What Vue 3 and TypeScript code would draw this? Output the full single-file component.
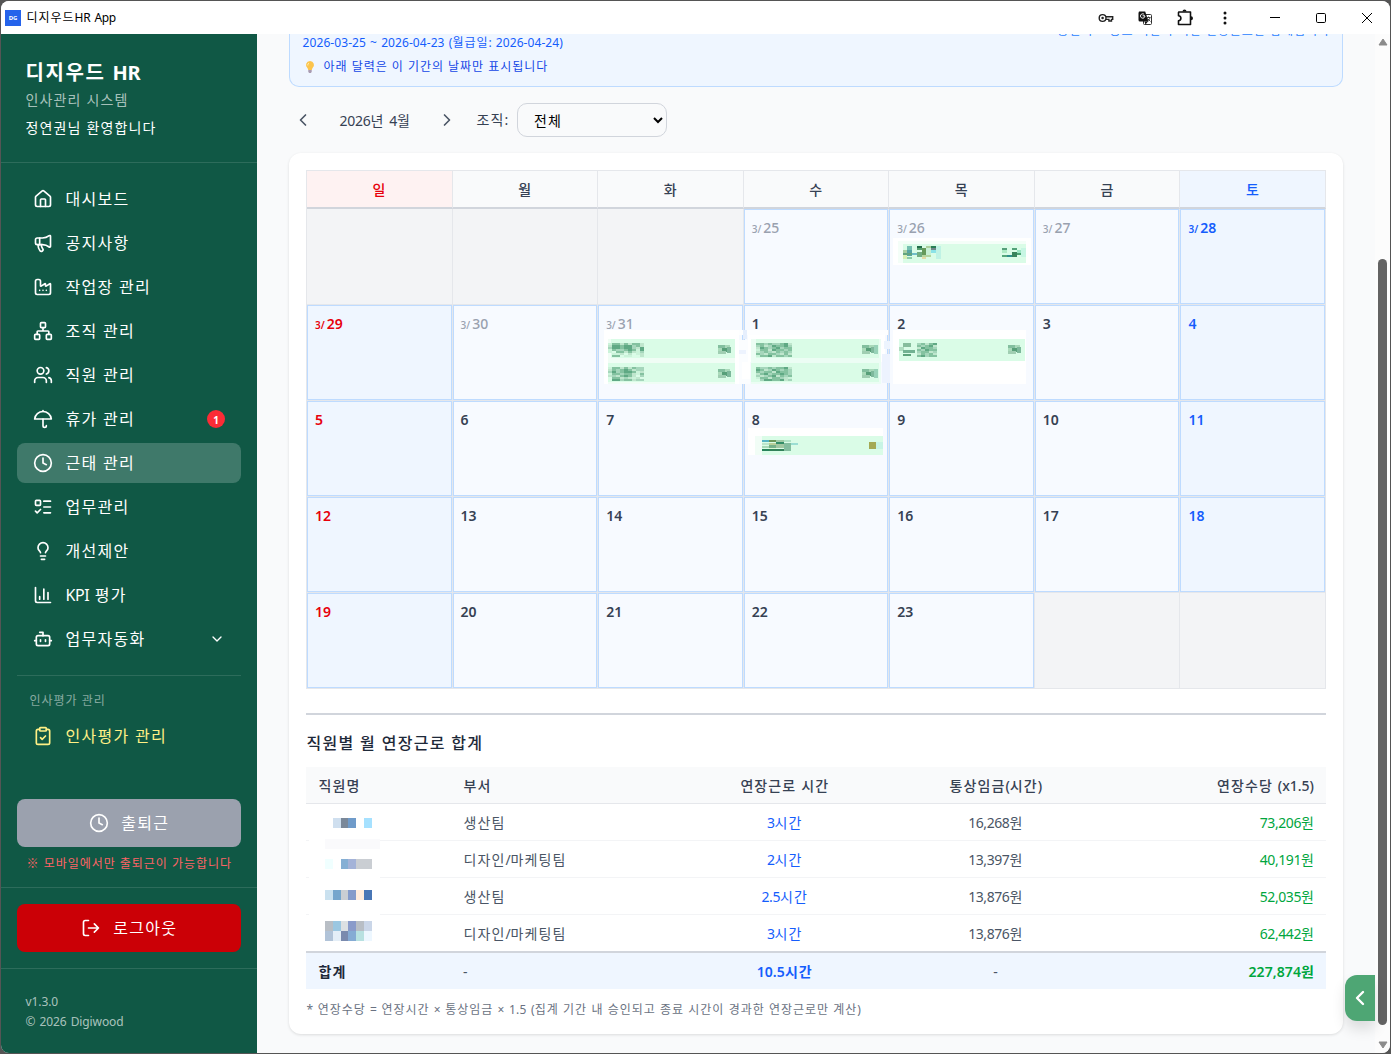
<script setup lang="ts">
import { h, type FunctionalComponent } from 'vue'

// Splits a label into Hangul and Latin runs, so that each gets its own tracking.
const Tx: FunctionalComponent<{ t: string }> = (props) =>
  h(
    'span',
    { class: 'tx' },
    (props.t.match(/[\uac00-\ud7a3\s※]+|[^\uac00-\ud7a3\s※]+/g) ?? []).map((run) =>
      h('span', { class: /[\uac00-\ud7a3\s※]/.test(run) ? 'ko' : 'la' }, run),
    ),
  )
Tx.props = ['t']

const icons: Record<string, string[]> = {
  house: [
    'M15 21v-8a1 1 0 0 0-1-1h-4a1 1 0 0 0-1 1v8',
    'M3 10a2 2 0 0 1 .709-1.528l7-5.999a2 2 0 0 1 2.582 0l7 5.999A2 2 0 0 1 21 10v9a2 2 0 0 1-2 2H5a2 2 0 0 1-2-2z',
  ],
  megaphone: [
    'M11 6a13 13 0 0 0 8.4-2.8A1 1 0 0 1 21 4v12a1 1 0 0 1-1.6.8A13 13 0 0 0 11 14H5a2 2 0 0 1-2-2V8a2 2 0 0 1 2-2z',
    'M6 14a12 12 0 0 0 2.4 7.2 2 2 0 0 0 3.2-2.4A8 8 0 0 1 10 14',
    'M8 6v8',
  ],
  factory: [
    'M12 16h.01M16 16h.01M8 16h.01',
    'M3 19a2 2 0 0 0 2 2h14a2 2 0 0 0 2-2V8.5a.5.5 0 0 0-.769-.422l-4.462 2.844A.5.5 0 0 1 15 10.5v-2a.5.5 0 0 0-.769-.422L9.77 10.922A.5.5 0 0 1 9 10.5V5a2 2 0 0 0-2-2H5a2 2 0 0 0-2 2z',
  ],
  network: [
    'M17 16h4a1 1 0 0 1 1 1v4a1 1 0 0 1-1 1h-4a1 1 0 0 1-1-1v-4a1 1 0 0 1 1-1z',
    'M3 16h4a1 1 0 0 1 1 1v4a1 1 0 0 1-1 1H3a1 1 0 0 1-1-1v-4a1 1 0 0 1 1-1z',
    'M10 2h4a1 1 0 0 1 1 1v4a1 1 0 0 1-1 1h-4a1 1 0 0 1-1-1V3a1 1 0 0 1 1-1z',
    'M5 16v-3a1 1 0 0 1 1-1h12a1 1 0 0 1 1 1v3M12 12V8',
  ],
  users: [
    'M16 21v-2a4 4 0 0 0-4-4H6a4 4 0 0 0-4 4v2',
    'M16 3.128a4 4 0 0 1 0 7.744M22 21v-2a4 4 0 0 0-3-3.87',
    'M5 7a4 4 0 1 0 8 0a4 4 0 1 0-8 0',
  ],
  umbrella: ['M22 12a10.06 10.06 1 0 0-20 0Z', 'M12 12v8a2 2 0 0 0 4 0M12 2v1'],
  clock: ['M2 12a10 10 0 1 0 20 0a10 10 0 1 0-20 0', 'M12 6v6l4 2'],
  todo: [
    'M13 5h8M13 12h8M13 19h8m-18-2 2 2 4-4',
    'M4 4h4a1 1 0 0 1 1 1v4a1 1 0 0 1-1 1H4a1 1 0 0 1-1-1V5a1 1 0 0 1 1-1z',
  ],
  bulb: [
    'M15 14c.2-1 .7-1.7 1.5-2.5 1-.9 1.5-2.2 1.5-3.5A6 6 0 0 0 6 8c0 1 .2 2.2 1.5 3.5.7.7 1.3 1.5 1.5 2.5',
    'M9 18h6M10 22h4',
  ],
  chart: ['M3 3v16a2 2 0 0 0 2 2h16', 'M18 17V9M13 17V5M8 17v-3'],
  bot: [
    'M12 8V4H8M2 14h2M20 14h2M15 13v2M9 13v2',
    'M6 8h12a2 2 0 0 1 2 2v8a2 2 0 0 1-2 2H6a2 2 0 0 1-2-2v-8a2 2 0 0 1 2-2z',
  ],
  clipboard: [
    'M9 2h6a1 1 0 0 1 1 1v2a1 1 0 0 1-1 1H9a1 1 0 0 1-1-1V3a1 1 0 0 1 1-1z',
    'M16 4h2a2 2 0 0 1 2 2v14a2 2 0 0 1-2 2H6a2 2 0 0 1-2-2V6a2 2 0 0 1 2-2h2',
    'm9 14 2 2 4-4',
  ],
  logout: ['m16 17 5-5-5-5M21 12H9', 'M9 21H5a2 2 0 0 1-2-2V5a2 2 0 0 1 2-2h4'],
  down: ['m6 9 6 6 6-6'],
  left: ['m15 18-6-6 6-6'],
  right: ['m9 18 6-6-6-6'],
}

const Icon: FunctionalComponent<{ name: string; size?: number; sw?: number }> = (props) =>
  h(
    'svg',
    {
      class: 'icon',
      width: props.size ?? 20,
      height: props.size ?? 20,
      viewBox: '0 0 24 24',
      fill: 'none',
      stroke: 'currentColor',
      'stroke-width': props.sw ?? 2,
      'stroke-linecap': 'round',
      'stroke-linejoin': 'round',
    },
    icons[props.name].map((d) => h('path', { d })),
  )
Icon.props = ['name', 'size', 'sw']

interface NavItem { icon: string; label: string; active?: boolean; badge?: string; more?: boolean }
const nav: NavItem[] = [
  { icon: 'house', label: '대시보드' },
  { icon: 'megaphone', label: '공지사항' },
  { icon: 'factory', label: '작업장 관리' },
  { icon: 'network', label: '조직 관리' },
  { icon: 'users', label: '직원 관리' },
  { icon: 'umbrella', label: '휴가 관리', badge: '1' },
  { icon: 'clock', label: '근태 관리', active: true },
  { icon: 'todo', label: '업무관리' },
  { icon: 'bulb', label: '개선제안' },
  { icon: 'chart', label: 'KPI 평가' },
  { icon: 'bot', label: '업무자동화', more: true },
]

const weekdays = ['일', '월', '화', '수', '목', '금', '토']

interface Day { num: number; march: boolean; blank: boolean; col: number }
const days: Day[] = Array.from({ length: 35 }, (_, i) => {
  const offset = i - 3
  const march = offset < 7
  return {
    num: march ? 25 + offset : offset - 6,
    march,
    blank: offset < 0 || offset > 29,
    col: i % 7,
  }
})

// Masked entries: [x, y, width, height, colour]
type Px = [number, number, number, number, string]
const bars: Px[] = [
  [893, 238, 138, 27, '#fff'], [898, 241, 128, 22, '#f4fef8'], [903, 244, 123, 19, '#dafce7'],
  [604, 330, 135, 54, '#fff'], [739, 330, 149, 5, '#fdfeff'], [739, 340, 11, 44, '#fbfdff'],
  [743, 330, 4, 9, '#e6effd'], [739, 350, 7, 4, '#edf3fe'], [742, 362, 8, 17, '#fff'],
  [748, 335, 137, 27, '#fff'], [751, 362, 130, 22, '#fdfffe'],
  [884, 341, 6, 8, '#edf4fe'], [882, 354, 8, 29, '#edf3fe'],
  [893, 330, 133, 54, '#fff'],
  [608, 339, 127, 45, '#f0fdf5'], [611, 339, 124, 19, '#dafce7'], [608, 363, 127, 19, '#dafce7'],
  [751, 339, 130, 45, '#ecfdf4'], [756, 339, 123, 19, '#dafce7'], [751, 363, 128, 19, '#dafce7'],
  [899, 339, 126, 22, '#dafce7'],
  [748, 428, 135, 27, '#fff'], [755, 436, 128, 19, '#f1fdf6'], [762, 436, 121, 19, '#dafce7'],
]

// Each character of the bitmap picks a shade; cells are 4px by 2px.
const shades: Record<string, string> = { a: '#5fa984', b: '#84c2a0', c: '#a5d6bb', d: '#bfe6cd', e: '#cbf3da' }
function mosaic(x: number, y: number, bitmap: string[]): Px[] {
  return bitmap.flatMap((line, r) =>
    [...line].flatMap((ch, c): Px[] => (shades[ch] ? [[x + c * 4, y + r * 2, 4, 2, shades[ch]]] : [])),
  )
}
function clock(x: number, y: number): Px[] {
  return [
    [x, y, 8, 3, '#83bf9f'], [x + 7, y, 5, 3, '#a9d9ba'], [x, y + 3, 4, 3, '#aadaba'],
    [x + 4, y + 3, 5, 4, '#589f79'], [x + 9, y + 2, 4, 6, '#7db89b'], [x, y + 6, 8, 3, '#a0ceb2'],
  ]
}
const masks: Px[] = [
  ...bars,
  ...mosaic(608, 343, ['ebbdbdbbd', 'daabaacbd', 'caabaacda', 'ebccbabea', 'e.bbdbdec', '.eed.d.ed', '.bb.ee..d']),
  ...mosaic(608, 367, ['ebbdbdbcc', 'dbcbabdcc', 'cacbaabed', 'ebbcbbdeb', 'dcdbabd.c', '.bbdcded.', '.aacbbdcc']),
  ...mosaic(756, 343, ['bbcbccbad', 'cbdcabbac', 'dabcbacbb', 'ebbdabbcb', 'dcbcdbcbc', 'bcdbbcdbd', 'ebbadbbcb']),
  ...mosaic(756, 367, ['bccbcbbad', 'abdcabcbc', 'bcbbdabbc', 'dbacbbabc', 'cdcbadbcb', 'ebbdbbcde', '.caabbadc']),
  [903, 343, 8, 4, '#87bd9d'], [899, 347, 5, 4, '#b0ddc0'], [903, 350, 12, 3, '#72b292'], [903, 354, 8, 2, '#5da37b'],
  ...mosaic(917, 343, ['cbdba', 'bcbad', 'dabbc', 'bcabb', 'cbbdc', 'dbcbd', 'bacbb']),
  ...clock(718, 345), ...clock(718, 369), ...clock(862, 345), ...clock(862, 369), ...clock(1008, 345),
  [874, 345, 4, 9, '#98d2b8'], [874, 369, 4, 9, '#98d2b8'],
  [907, 246, 5, 4, '#75bfb0'], [907, 250, 5, 6, '#57a3a3'], [903, 250, 4, 4, '#a7cea2'], [903, 253, 9, 2, '#62a37e'],
  [903, 255, 4, 4, '#d6efb5'], [907, 257, 5, 2, '#8bcba9'], [912, 253, 5, 2, '#70bdc9'],
  [917, 246, 5, 2, '#226d49'], [917, 248, 5, 2, '#55a06e'], [922, 248, 4, 7, '#659a5b'], [917, 252, 5, 5, '#72ad82'],
  [926, 246, 5, 2, '#accf9c'], [926, 248, 5, 8, '#c6f0d4'], [922, 255, 9, 2, '#b3d5a0'], [922, 257, 4, 2, '#e4dba4'],
  [931, 246, 5, 2, '#277e55'], [931, 248, 5, 2, '#6f858a'], [931, 250, 5, 3, '#8be2e7'], [936, 246, 5, 13, '#bff2e4'],
  [1002, 248, 5, 2, '#559f79'], [1002, 250, 5, 3, '#aeeac5'], [1002, 255, 5, 2, '#55a67b'], [1007, 255, 5, 2, '#30908d'],
  [1012, 248, 5, 2, '#52a278'], [1012, 252, 5, 5, '#38845c'], [1017, 250, 4, 3, '#9ae4c2'], [1017, 253, 4, 2, '#4ba273'],
  [1021, 248, 5, 9, '#c7f6e3'],
  [762, 440, 7, 2, '#58b4c5'], [769, 440, 7, 2, '#6b985a'], [776, 440, 8, 2, '#9fcba6'], [784, 440, 7, 2, '#b0e3c7'],
  [762, 443, 7, 2, '#bde5cc'], [769, 443, 7, 2, '#b9cf99'], [776, 442, 8, 2, '#348d68'], [784, 443, 7, 8, '#83bd9f'],
  [791, 443, 7, 2, '#9bded3'], [762, 446, 7, 2, '#a9d8b7'], [769, 445, 7, 3, '#76b18a'], [776, 444, 8, 4, '#a1c7a2'],
  [769, 448, 7, 2, '#dafad2'], [762, 449, 7, 2, '#27835a'], [769, 449, 15, 2, '#328159'],
  [869, 442, 7, 7, '#a4a954'], [876, 442, 7, 7, '#c8f4e5'],
]

const nameMasks: Px[] = [
  [309, 806, 71, 144, '#fff'],
  [333, 818, 8, 10, '#cfdfef'], [341, 818, 7, 10, '#7a8899'], [348, 818, 8, 10, '#6f9bca'], [364, 818, 8, 10, '#a6e1ff'],
  [325, 839, 55, 10, '#fafafc'],
  [325, 859, 8, 10, '#f0ffff'], [341, 859, 7, 10, '#85afd4'], [348, 859, 8, 10, '#a4b3d8'], [356, 859, 16, 10, '#caced3'],
  [325, 890, 8, 10, '#cae1ef'], [333, 890, 8, 10, '#75a6cd'], [341, 890, 7, 10, '#caced3'], [348, 890, 8, 10, '#859bca'],
  [356, 890, 8, 10, '#ffecdc'], [364, 890, 8, 10, '#4876b5'],
  [325, 921, 8, 10, '#b8bec5'], [333, 921, 8, 10, '#9bc7e1'], [341, 921, 7, 10, '#dce0e3'], [348, 921, 8, 10, '#8a9bca'],
  [356, 921, 8, 10, '#b8bec5'], [364, 921, 8, 10, '#cad6e8'],
  [325, 931, 8, 10, '#b1c3d8'], [333, 931, 8, 10, '#e4eef7'], [341, 931, 7, 10, '#7a8aae'], [348, 931, 8, 10, '#85abd4'],
  [356, 931, 8, 10, '#b8e1e1'], [364, 931, 8, 10, '#edf7ff'],
]

const rows = [
  { dept: '생산팀', hours: '3시간', wage: '16,268원', pay: '73,206원' },
  { dept: '디자인/마케팅팀', hours: '2시간', wage: '13,397원', pay: '40,191원' },
  { dept: '생산팀', hours: '2.5시간', wage: '13,876원', pay: '52,035원' },
  { dept: '디자인/마케팅팀', hours: '3시간', wage: '13,876원', pay: '62,442원' },
]
</script>

<template>
  <div class="screen">
    <div class="window">
      <header class="titlebar">
        <span class="app-icon">DG</span>
        <span class="app-title"><Tx t="디지우드HR App" /></span>
        <div class="tools">
          <svg width="16" height="16" viewBox="0 0 16 16" fill="none" stroke="#222" stroke-width="1.4">
            <circle cx="4.6" cy="8" r="3.4" /><circle cx="4.6" cy="8" r="1.3" fill="#222" stroke="none" />
            <path d="M8 6.800h6.700v2.600h-1.200v1.600h-2.600V9.400H8" />
          </svg>
          <svg width="16" height="16" viewBox="0 0 16 16">
            <rect x="6.5" y="4.500" width="8" height="10" rx="1" fill="#fff" stroke="#333" />
            <path d="M2 1.500h6.200l3.300 10H3a1.500 1.500 0 0 1-1.500-1.500V3z" fill="#111" />
            <path d="M8 5.800H5.600M7.900 6a2.200 2.200 0 1 1-.8-1.700" stroke="#fff" fill="none" />
            <path d="M9.500 7.500h4M11.500 6.500v1M13 7.500c-.5 2-1.500 3-3 4M10.500 8.500l3 3" stroke="#333" stroke-width=".9" fill="none" />
            <path d="M7.500 11.500h3.500l-2.500 3z" fill="#111" />
          </svg>
          <svg width="18" height="18" viewBox="0 0 18 18">
            <path d="M3.500 3h11v12.500h-12v-3.800c3.200-.4 3.200-4.600 0-5V3.500q0-.5.5-.5z" fill="none" stroke="#111" stroke-width="1.600" stroke-linejoin="round" />
            <path d="M6.500 2.500a2 2 0 0 1 4 0zM15 7.200a2 2 0 0 1 0 4z" fill="#111" />
          </svg>
          <svg width="16" height="16" viewBox="0 0 16 16" fill="#111">
            <circle cx="8" cy="3" r="1.500" /><circle cx="8" cy="8" r="1.500" /><circle cx="8" cy="13" r="1.500" />
          </svg>
        </div>
        <div class="controls">
          <svg width="12" height="12" viewBox="0 0 12 12" stroke="#000"><path d="M1 5.500h10" /></svg>
          <svg width="12" height="12" viewBox="0 0 12 12" stroke="#000" fill="none"><rect x="1.500" y="1.500" width="9" height="9" rx="1.200" /></svg>
          <svg width="12" height="12" viewBox="0 0 12 12" stroke="#000"><path d="m1 1 10 10M11 1 1 11" /></svg>
        </div>
      </header>

      <div class="body">
        <aside class="sidebar">
          <div class="brand">
            <h1><Tx t="디지우드 HR" /></h1>
            <p class="sub"><Tx t="인사관리 시스템" /></p>
            <p class="hello"><Tx t="정연권님 환영합니다" /></p>
          </div>
          <nav class="nav">
            <a v-for="item in nav" :key="item.label" class="nav-item" :class="{ active: item.active }">
              <Icon :name="item.icon" />
              <span class="nav-label"><Tx :t="item.label" /></span>
              <span v-if="item.badge" class="badge">{{ item.badge }}</span>
              <Icon v-if="item.more" name="down" :size="16" />
            </a>
            <div class="nav-group">
              <p class="group-label"><Tx t="인사평가 관리" /></p>
              <a class="nav-item gold"><Icon name="clipboard" /><span class="nav-label"><Tx t="인사평가 관리" /></span></a>
            </div>
          </nav>
          <div class="punch">
            <button class="btn gray"><Icon name="clock" /><Tx t="출퇴근" /></button>
            <p class="warn"><Tx t="※ 모바일에서만 출퇴근이 가능합니다" /></p>
          </div>
          <div class="logout">
            <button class="btn red"><Icon name="logout" /><Tx t="로그아웃" /></button>
          </div>
          <div class="version">
            <p><Tx t="v1.3.0" /></p>
            <p><Tx t="© 2026 Digiwood" /></p>
          </div>
        </aside>

        <main class="main">
          <section class="info">
            <div>
              <p class="range"><Tx t="2026-03-25 ~ 2026-04-23 (월급일: 2026-04-24)" /></p>
              <p class="tip">
                <svg width="16" height="14" viewBox="0 0 16 14">
                  <path d="M8 1a4 4 0 0 1 2.400 7.200L9.800 10H6.200l-.6-1.800A4 4 0 0 1 8 1z" fill="#fcc44c" />
                  <path d="M7 3.200a2 2 0 0 0-1.200 2.300" stroke="#fff0b0" fill="none" />
                  <path d="M6.300 10h3.400v2L8.800 13H7.200l-.9-1z" fill="#a99bb0" />
                </svg>
                <Tx t="아래 달력은 이 기간의 날짜만 표시됩니다" />
              </p>
            </div>
            <p class="info-note"><Tx t="승인되고 종료 시간이 지난 연장근로만 합계됩니다" /></p>
          </section>

          <section class="filters">
            <span class="arrow"><Icon name="left" /></span>
            <span class="month"><Tx t="2026년 4월" /></span>
            <span class="arrow"><Icon name="right" /></span>
            <label class="org"><Tx t="조직:" /></label>
            <select class="select"><option>전체</option></select>
          </section>

          <section class="card">
            <div class="calendar">
              <div v-for="(d, i) in weekdays" :key="d" class="dow" :class="{ sun: i === 0, sat: i === 6 }"><Tx :t="d" /></div>
              <div
                v-for="(d, i) in days"
                :key="i"
                class="day"
                :class="{ blank: d.blank, sun: d.col === 0, sat: d.col === 6, prev: d.march }"
              >
                <div v-if="!d.blank" class="day-in">
                  <span v-if="d.march" class="mon">3/</span><span class="num">{{ d.num }}</span>
                </div>
              </div>
              <svg class="masks" viewBox="306 209 1020 480" shape-rendering="crispEdges">
                <rect v-for="(m, i) in masks" :key="i" :x="m[0]" :y="m[1]" :width="m[2]" :height="m[3]" :fill="m[4]" />
              </svg>
            </div>

            <div class="summary">
              <h2><Tx t="직원별 월 연장근로 합계" /></h2>
              <div class="table">
                <div class="tr head">
                  <span><Tx t="직원명" /></span><span><Tx t="부서" /></span>
                  <span class="c"><Tx t="연장근로 시간" /></span><span class="c"><Tx t="통상임금(시간)" /></span>
                  <span class="r"><Tx t="연장수당 (x1.5)" /></span>
                </div>
                <div v-for="(r, i) in rows" :key="i" class="tr">
                  <span></span><span><Tx :t="r.dept" /></span>
                  <span class="c blue"><Tx :t="r.hours" /></span><span class="c"><Tx :t="r.wage" /></span>
                  <span class="r green"><Tx :t="r.pay" /></span>
                </div>
                <div class="tr total">
                  <span class="strong"><Tx t="합계" /></span><span>-</span>
                  <span class="c blue strong"><Tx t="10.5시간" /></span><span class="c">-</span>
                  <span class="r green strong"><Tx t="227,874원" /></span>
                </div>
                <svg class="name-masks" viewBox="306 804 80 147" shape-rendering="crispEdges">
                  <rect v-for="(m, i) in nameMasks" :key="i" :x="m[0]" :y="m[1]" :width="m[2]" :height="m[3]" :fill="m[4]" />
                </svg>
              </div>
              <p class="foot"><Tx t="* 연장수당 = 연장시간 × 통상임금 × 1.5 (집계 기간 내 승인되고 종료 시간이 경과한 연장근로만 계산)" /></p>
            </div>
          </section>
          <button class="drawer"><Icon name="left" :size="24" :sw="2.4" /></button>
        </main>

        <div class="scrollbar">
          <svg width="10" height="8" viewBox="0 0 10 8"><path d="M5 1 9 7H1z" fill="#8b8b8b" stroke="#8b8b8b" stroke-linejoin="round" /></svg>
          <div class="thumb"></div>
          <svg width="10" height="8" viewBox="0 0 10 8"><path d="M5 7 1 1h8z" fill="#8b8b8b" stroke="#8b8b8b" stroke-linejoin="round" /></svg>
        </div>
      </div>
    </div>
  </div>
</template>

<style>
body {
  background: #555;
}
.tx {
  white-space: pre;
  margin-left: 0.6px;
}
.tx .ko {
  font-family: 'Noto Sans CJK KR', sans-serif;
  letter-spacing: 0.08em;
  word-spacing: 0.04em;
  line-height: 0;
}
.tx .la {
  letter-spacing: var(--la, -0.03em);
}
.icon {
  display: block;
  flex: none;
}
</style>

<style scoped>
* {
  box-sizing: border-box;
}
p,
h1,
h2 {
  margin: 0;
}
.screen {
  height: 1054px;
  padding: 1px;
  overflow: hidden;
  background: #555;
  font-family: 'Noto Sans', 'Noto Sans CJK KR', sans-serif;
  font-size: 14px;
  line-height: 20px;
  color: #364153;
}
.window {
  height: 1052px;
  display: flex;
  flex-direction: column;
  border-radius: 8px;
  overflow: hidden;
  background: #f9fafb;
}
.titlebar {
  height: 33px;
  flex: none;
  display: flex;
  align-items: center;
  padding: 0 16px 0 4px;
  background: #fff;
  color: #000;
}
.app-icon {
  width: 16px;
  height: 16px;
  background: #2563eb;
  color: #fff;
  font: 700 6px/16px 'Noto Sans', sans-serif;
  text-align: center;
}
.app-title {
  margin-left: 5px;
  font-size: 12px;
}
.tools {
  margin-left: auto;
  display: flex;
  align-items: center;
  gap: 23px;
  margin-right: 36px;
}
.tools svg {
  display: block;
}
.controls {
  display: flex;
  gap: 34px;
  margin-right: 1px;
}
.body {
  flex: 1;
  display: flex;
  min-height: 0;
}
.sidebar {
  width: 256px;
  flex: none;
  display: flex;
  flex-direction: column;
  background: #105845;
  color: #fff;
}
.brand {
  padding: 25px 24px 24px;
  border-bottom: 1px solid rgba(255, 255, 255, 0.12);
}
.brand h1 {
  font-size: 20px;
  line-height: 28px;
  --la: -0.02em;
}
.sub {
  margin-top: 3px;
  color: rgba(255, 255, 255, 0.65);
}
.hello {
  margin-top: 8px;
}
.nav {
  padding: 16px;
  display: flex;
  flex-direction: column;
  gap: 4px;
  flex: 1;
}
.nav-item {
  height: 40px;
  padding: 0 16px;
  display: flex;
  align-items: center;
  gap: 12px;
  border-radius: 8px;
  font-size: 16px;
  line-height: 24px;
}
.nav-item.active {
  background: rgba(255, 255, 255, 0.2);
}
.nav-label {
  flex: 1;
}
.badge {
  width: 18px;
  height: 18px;
  padding-top: 1px;
  border-radius: 50%;
  background: #fb2c36;
  font-size: 10px;
  font-weight: 700;
  line-height: 18px;
  text-align: center;
}
.nav-group {
  margin-top: 12px;
  padding-top: 17px;
  border-top: 1px solid rgba(255, 255, 255, 0.12);
}
.group-label {
  padding: 0 12px;
  margin-bottom: 7px;
  font-size: 12px;
  line-height: 16px;
  color: rgba(255, 255, 255, 0.5);
}
.gold {
  color: #fff085;
}
.punch {
  padding: 0 16px 15px;
  border-bottom: 1px solid rgba(255, 255, 255, 0.12);
}
.btn {
  width: 100%;
  height: 48px;
  display: flex;
  align-items: center;
  justify-content: center;
  gap: 12px;
  border: 0;
  border-radius: 8px;
  color: #fff;
  font: 16px/24px 'Noto Sans', sans-serif;
}
.gray {
  background: #9ba1ae;
}
.red {
  background: #cb0006;
}
.warn {
  margin-top: 9px;
  font-size: 12px;
  line-height: 16px;
  text-align: center;
  color: #ff6467;
}
.logout {
  padding: 16px;
  border-bottom: 1px solid rgba(255, 255, 255, 0.12);
}
.version {
  padding: 23px 24px 21px;
  font-size: 12px;
  color: rgba(255, 255, 255, 0.65);
  --la: -0.01em;
}
.main {
  position: relative;
  flex: 1;
  padding: 0 32px;
  background: #f9fafb;
}
.info {
  height: 53px;
  padding: 1px 12px 0;
  display: flex;
  justify-content: space-between;
  overflow: hidden;
  border: 1px solid #bedbff;
  border-top: 0;
  border-radius: 0 0 10px 10px;
  background: #eff6ff;
  font-size: 12px;
  line-height: 16px;
}
.range {
  color: #155dfc;
  --la: 0.006em;
}
.tip {
  margin-top: 8px;
  display: flex;
  align-items: center;
  gap: 5px;
  color: #1447e6;
}
.info-note {
  margin-top: -12px;
  color: #2b7fff;
}
.filters {
  margin-top: 16px;
  height: 34px;
  display: flex;
  align-items: center;
}
.arrow {
  padding: 0 4px;
  color: #4a5565;
}
.month {
  width: 116px;
  padding-top: 1px;
  text-align: center;
  --la: -0.02em;
}
.org {
  width: 32px;
  margin: 0 8px 0 15px;
  white-space: nowrap;
}
.select {
  width: 150px;
  height: 34px;
  margin-left: 1px;
  padding: 0 12px;
  border: 1px solid #d1d5dc;
  border-radius: 10px;
  background: transparent;
  color: #000;
  font: 14px 'Noto Sans CJK KR', sans-serif;
  letter-spacing: 0.08em;
}
.card {
  margin-top: 16px;
  height: 881px;
  padding: 17px;
  border-radius: 12px;
  background: #fff;
  box-shadow: 0 1px 3px rgba(0, 0, 0, 0.12);
}
.calendar {
  position: relative;
  display: grid;
  grid-template-columns: repeat(7, 1fr);
  border-left: 1px solid #e5e7eb;
}
.masks {
  position: absolute;
  left: -1px;
  top: 39px;
  width: 1020px;
  height: 480px;
}
.dow {
  height: 39px;
  padding-top: 9px;
  border: solid #e5e7eb;
  border-width: 1px 1px 2px 0;
  border-bottom-color: #d1d5dc;
  background: #f9fafb;
  font-weight: 500;
  text-align: center;
}
.dow.sun {
  background: #fef2f2;
  color: #e7000b;
}
.dow.sat {
  background: #eff6ff;
  color: #155dfc;
}
.day {
  height: 96px;
  border: solid #e5e7eb;
  border-width: 0 1px 1px 0;
  background: #f3f4f6;
}
.day-in {
  height: 95px;
  padding: 8px 7px;
  border: 1px solid #bedbff;
  background: #f7faff;
  font-weight: 600;
  display: flex;
  align-items: baseline;
}
.mon {
  font-size: 10px;
  margin-right: 2px;
}
.prev {
  color: #99a1af;
}
.prev .day-in {
  font-weight: 500;
}
.day.sun .day-in,
.day.sat .day-in {
  background: #eff6ff;
  font-weight: 600;
}
.day.sun {
  color: #e7000b;
}
.day.sat {
  color: #155dfc;
}
.summary {
  margin-top: 24px;
  padding-top: 16px;
  border-top: 2px solid #d1d5dc;
}
.summary h2 {
  font-size: 16px;
  line-height: 24px;
  font-weight: 500;
  color: #1e2939;
}
.table {
  position: relative;
  margin-top: 12px;
}
.name-masks {
  position: absolute;
  left: 0;
  top: 37px;
  width: 80px;
  height: 147px;
}
.tr {
  height: 37px;
  display: grid;
  grid-template-columns: 145px 228px 211px 211px 225px;
  align-items: center;
  border-bottom: 1px solid #f3f4f6;
  color: #4a5565;
}
.tr > span {
  padding: 2px 12px 0;
}
.tr > .r {
  padding-right: 11px;
}
.head {
  background: #f9fafb;
  border-color: #e5e7eb;
  font-weight: 500;
  color: #364153;
  --la: 0;
}
.head > .r {
  padding-right: 12px;
}
.total {
  margin-top: -1px;
  height: 38px;
  border: 0;
  border-top: 2px solid #d1d5dc;
  background: #eff6ff;
}
.strong {
  font-weight: 600;
  color: #1e2939;
  --la: 0.005em;
}
.c {
  text-align: center;
}
.r {
  text-align: right;
}
.blue {
  color: #155dfc;
}
.green {
  color: #00a63e;
}
.foot {
  margin-top: 13px;
  font-size: 12px;
  line-height: 16px;
  color: #6a7282;
  --la: 0.02em;
}
.foot :deep(.ko) {
  word-spacing: 0.055em;
}
.drawer {
  position: absolute;
  right: 0;
  bottom: 32px;
  width: 30px;
  height: 46px;
  padding: 0 0 0 3px;
  border: 0;
  border-radius: 12px 0 0 12px;
  background: #4ea674;
  color: #fff;
  box-shadow: 0 8px 14px rgba(0, 0, 0, 0.12);
}
.scrollbar {
  width: 15px;
  flex: none;
  padding: 4px 0;
  display: flex;
  flex-direction: column;
  align-items: center;
  justify-content: space-between;
  background: #fcfcfc;
}
.scrollbar svg {
  display: block;
}
.thumb {
  width: 9px;
  height: 766px;
  margin: auto 0 16px;
  border-radius: 5px;
  background: #636363;
}
</style>
